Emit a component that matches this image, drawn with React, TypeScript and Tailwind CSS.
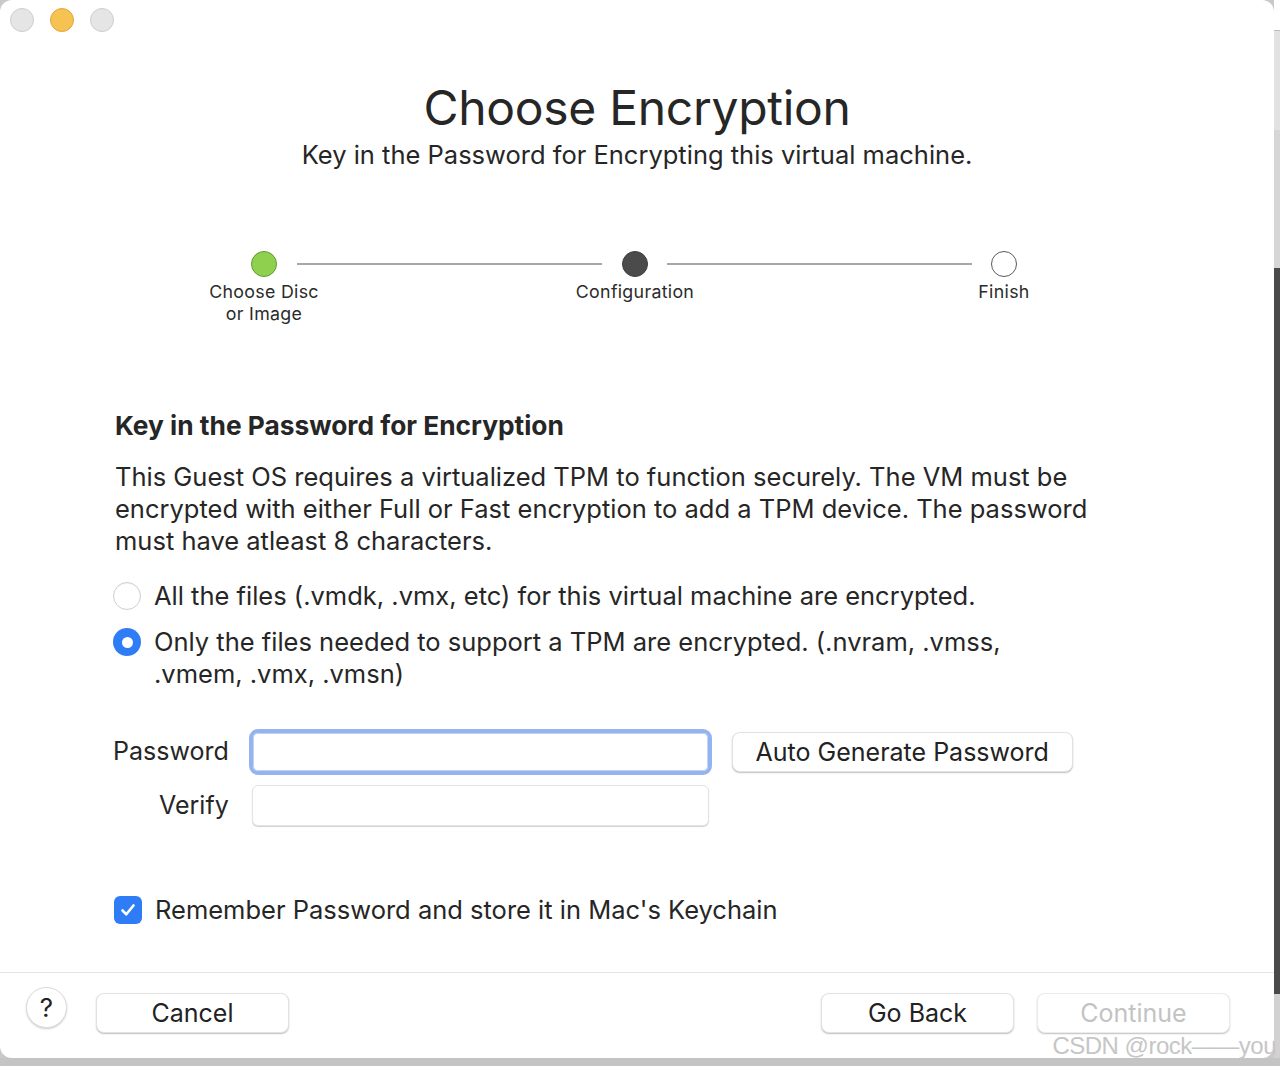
import React from 'react';

const FONT = { fontFamily: 'Inter, "Noto Sans", "Liberation Sans", sans-serif' };

const Light = ({ color }: { color: 'gray' | 'yellow' }) => (
  <div
    className={
      color === 'yellow'
        ? 'w-6 h-6 rounded-full bg-[#f6c251] border border-[#e0a73c]'
        : 'w-6 h-6 rounded-full bg-[#e5e5e5] border border-[#cdcdcd]'
    }
  />
);

const Step = ({ label, kind }: { label: React.ReactNode; kind: 'done' | 'current' | 'todo' }) => {
  const dot =
    kind === 'done'
      ? 'bg-[#8fd14f] border border-[#5e9a33]'
      : kind === 'current'
      ? 'bg-[#4b4b4b] border border-[#3d3d3d]'
      : 'bg-white border border-[#5a5a5a]';
  return (
    <div className="flex flex-col items-center w-[140px]">
      <div className={`w-[26px] h-[26px] rounded-full ${dot}`} />
      <div className="mt-[4px] text-[17.8px] leading-[22px] text-[#2b2b2b] text-center tracking-[0.3px]">{label}</div>
    </div>
  );
};

const MacButton = ({ children, w, disabled }: { children: React.ReactNode; w: string; disabled?: boolean }) => (
  <button
    className={`${w} h-[40px] rounded-[8px] bg-white border border-[#e2e2e2] shadow-[0_1px_1.5px_rgba(0,0,0,0.25)] text-[25px] leading-none ${
      disabled ? 'text-[#c3c3c3] shadow-[0_0.5px_1px_rgba(0,0,0,0.08)] border-[#ececec]' : 'text-[#222]'
    }`}
  >
    {children}
  </button>
);

export default function App() {
  return (
    <div className="w-[1280px] h-[1066px] bg-[#c9c9c9] overflow-hidden flex flex-col" style={FONT}>
      <div className="flex h-[1058px]">
        {/* window */}
        <div className="relative w-[1274px] h-[1058px] bg-white rounded-[12px] flex flex-col">
          <div className="flex gap-4 pl-[10px] pt-[8px]">
            <Light color="gray" />
            <Light color="yellow" />
            <Light color="gray" />
          </div>

          <div className="flex flex-col items-center mt-[48px]">
            <h1 className="text-[48px] leading-[56px] text-[#262626] tracking-[-0.3px]">Choose Encryption</h1>
            <p className="text-[25.5px] leading-[32px] text-[#262626] mt-[3px]">
              Key in the Password for Encrypting this virtual machine.
            </p>
          </div>

          {/* stepper */}
          <div className="flex items-start mt-[80px] ml-[194px] w-[880px]">
            <Step kind="done" label={<>Choose Disc<br />or Image</>} />
            <div className="flex-1 h-[2px] bg-[#a7a7a7] mt-[12px] mx-[-37px]" />
            <Step kind="current" label="Configuration" />
            <div className="flex-1 h-[2px] bg-[#a7a7a7] mt-[12px] mx-[-38px]" />
            <Step kind="todo" label="Finish" />
          </div>

          <div className="pl-[115px] pr-[150px] mt-[85px] text-[#262626]">
            <h2 className="text-[26.3px] leading-[32px] font-bold">Key in the Password for Encryption</h2>
            <p className="text-[25.5px] leading-[32px] mt-[19px]">
              This Guest OS requires a virtualized TPM to function securely. The VM must be encrypted with either Full or
              Fast encryption to add a TPM device. The password must have atleast 8 characters.
            </p>

            <div className="flex flex-col gap-[14px] mt-[23px] ml-[-2px]">
              <div className="flex items-start gap-[13px]">
                <div className="w-[28px] h-[28px] rounded-full border border-[#cfcfcf] bg-white shadow-[inset_0_1px_1px_rgba(0,0,0,0.05)] mt-[2px] shrink-0" />
                <span className="text-[25.5px] leading-[32px]">
                  All the files (.vmdk, .vmx, etc) for this virtual machine are encrypted.
                </span>
              </div>
              <div className="flex items-start gap-[13px]">
                <div className="w-[28px] h-[28px] rounded-full bg-[#2f7df6] flex items-center justify-center mt-[2px] shrink-0">
                  <div className="w-[11px] h-[11px] rounded-full bg-white" />
                </div>
                <span className="text-[25.5px] leading-[32px] w-[900px]">
                  Only the files needed to support a TPM are encrypted. (.nvram, .vmss, .vmem, .vmx, .vmsn)
                </span>
              </div>
            </div>

            {/* password grid */}
            <div className="grid grid-cols-[auto_463px_auto] justify-start gap-x-[20px] gap-y-[10px] items-center mt-[39px] ml-[-2px]">
              <span className="text-[25px] text-right">Password</span>
              <div className="h-[46px] rounded-[9px] border-[4px] border-[#93b3f2]">
                <div className="h-full w-full rounded-[5px] bg-white border border-[#6f8fd8]/40" />
              </div>
              <MacButton w="w-[341px]">Auto Generate Password</MacButton>
              <span className="text-[25px] text-right">Verify</span>
              <div className="h-[41px] mx-[3px] rounded-[6px] border border-[#e3e3e3] shadow-[0_1px_1px_rgba(0,0,0,0.18)] bg-white" />
              <span />
            </div>

            <div className="flex items-center gap-[13px] mt-[68px] ml-[-1px]">
              <div className="w-[28px] h-[28px] rounded-[6px] bg-[#2f7df6] flex items-center justify-center shrink-0">
                <svg width="18" height="18" viewBox="0 0 18 18" fill="none">
                  <path d="M3.5 9.5 L7.3 13.3 L14.5 4.5" stroke="white" strokeWidth="2.6" strokeLinecap="round" strokeLinejoin="round" />
                </svg>
              </div>
              <span className="text-[25.5px] leading-[32px]">Remember Password and store it in Mac's Keychain</span>
            </div>
          </div>

          {/* footer */}
          <div className="mt-auto border-t border-[#e4e4e4] h-[86px] flex items-start pt-[20px] pl-[26px] pr-[44px]">
            <div className="w-[41px] h-[41px] rounded-full bg-white border border-[#dcdcdc] shadow-[0_1px_2px_rgba(0,0,0,0.2)] flex items-center justify-center text-[26px] text-[#222] leading-none mt-[-6px]">
              ?
            </div>
            <div className="ml-[29px]">
              <MacButton w="w-[193px]">Cancel</MacButton>
            </div>
            <div className="ml-auto flex gap-[23px]">
              <MacButton w="w-[193px]">Go Back</MacButton>
              <MacButton w="w-[193px]" disabled>Continue</MacButton>
            </div>
          </div>

          <div
            className="absolute right-[-2px] bottom-[0px] text-[24px] leading-none text-[#c6c6c6] tracking-[-0.5px]"
            style={{ fontFamily: '"Liberation Sans", Arial, sans-serif' }}
          >
            CSDN @rock——you
          </div>
        </div>

        {/* background strip at right */}
        <div className="w-[6px] flex flex-col">
          <div className="h-[30px] bg-white" />
          <div className="h-[100px] bg-[#e2e2e2] border-t border-[#bdbdbd]" />
          <div className="h-[138px] bg-[#d6d6d6]" />
          <div className="h-[726px] bg-[#4a4a4a]" />
          <div className="flex-1 bg-[#d2d2d2]" />
        </div>
      </div>
      <div className="flex-1 bg-[#c4c4c4]" />
    </div>
  );
}
